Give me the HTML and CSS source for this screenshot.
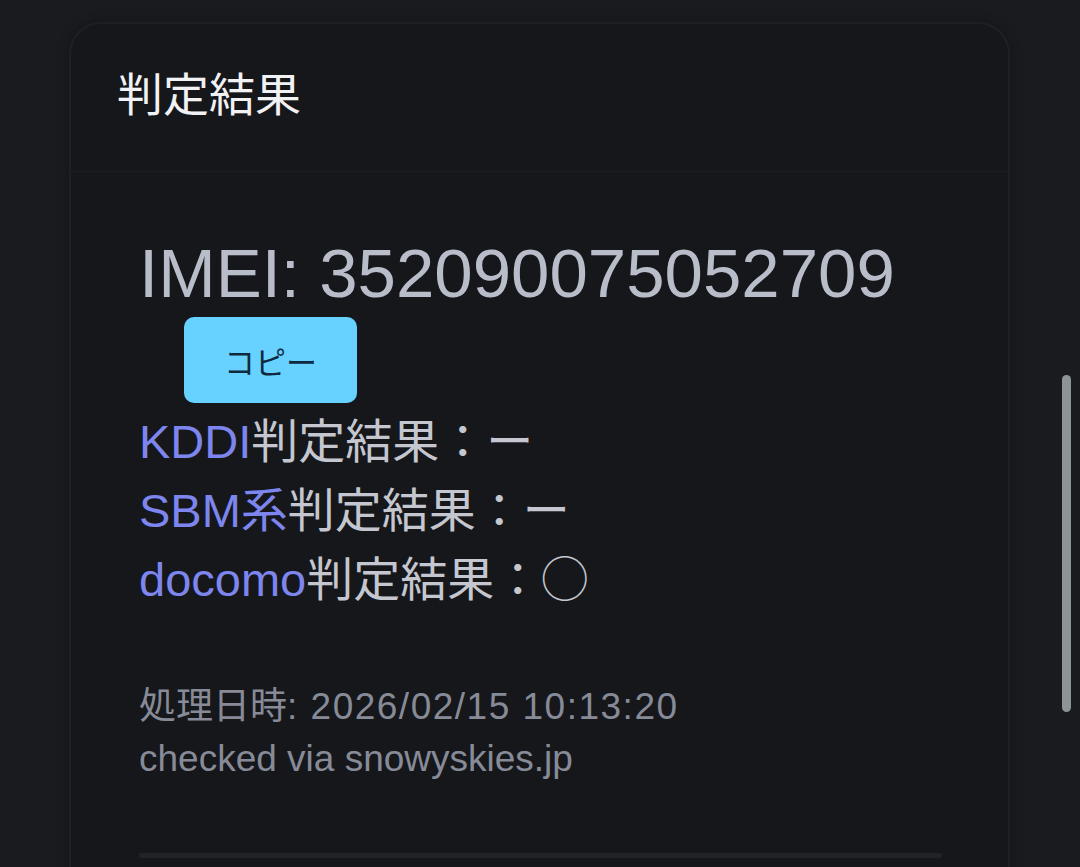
FILE: index.html
```html
<!DOCTYPE html>
<html lang="ja">
<head>
  <meta charset="UTF-8" />
  <meta name="viewport" content="width=device-width, initial-scale=1" />
  <title>判定結果</title>
  <link rel="stylesheet" href="styles.css">
</head>
<body>

  <div class="page">
    <div class="card">
      <h2 class="card-title">判定結果</h2>

      <div class="card-body">
        <div class="imei">IMEI: 352090075052709</div>
        <button class="copy-btn" type="button">コピー</button>

        <div class="results">
          <div class="result"><span class="carrier">KDDI</span>判定結果：ー</div>
          <div class="result"><span class="carrier">SBM系</span>判定結果：ー</div>
          <div class="result"><span class="carrier">docomo</span>判定結果：◯</div>
        </div>

        <div class="meta">
          <div>処理日時<span class="stamp">: 2026/02/15 10:13:20</span></div>
          <div>checked via snowyskies.jp</div>
        </div>

        <div class="divider"></div>
      </div>
    </div>
  </div>

  <div class="scroll-thumb"></div>

</body>
</html>
```

FILE: styles.css
```css
html, body {
  height: 100%;
}

body {
  margin: 0;
  background: #1a1b1f;
  font-family: 'Liberation Sans', 'Noto Sans CJK JP', sans-serif;
  color: #c4c7cf;
  overflow: hidden;
}

.page {
  padding: 22px 0 0 69px;
}

.card {
  width: 937px;
  min-height: 900px;
  background: #16171b;
  border: 2px solid #1f2025;
  border-radius: 32px;
  box-shadow: 0 0 12px rgba(0,0,0,0.25);
}

.card-title {
  margin: 0;
  padding: 41px 0 53px 46px;
  font-family: 'Noto Sans CJK JP', sans-serif;
  font-size: 46px;
  font-weight: 400;
  line-height: 53px;
  color: #f2f2f4;
  border-bottom: 1px solid #1b1c21;
}

.card-body {
  padding: 62px 66px 0 68px;
}

.imei {
  font-size: 69px;
  line-height: 79px;
  color: #b9bdc9;
}

.copy-btn {
  display: block;
  margin: 4px 0 4px 45px;
  width: 173px;
  height: 86px;
  border: none;
  border-radius: 10px;
  background: #67d2ff;
  color: #0f2a40;
  font-family: 'Noto Sans CJK JP', sans-serif;
  font-size: 31px;
  cursor: pointer;
}

.result {
  font-size: 47px;
  line-height: 69px;
  color: #c4c7cf;
}

.carrier {
  color: #7d86ee;
}

.meta {
  margin-top: 67px;
  font-size: 37px;
  line-height: 52px;
  color: #878b98;
}

.stamp {
  letter-spacing: 1.5px;
}

.divider {
  margin-top: 68px;
  height: 5px;
  border-radius: 3px;
  background: #222329;
}

.scroll-thumb {
  position: fixed;
  left: 1062px;
  top: 375px;
  width: 9px;
  height: 337px;
  border-radius: 5px;
  background: #8d9396;
}
```
